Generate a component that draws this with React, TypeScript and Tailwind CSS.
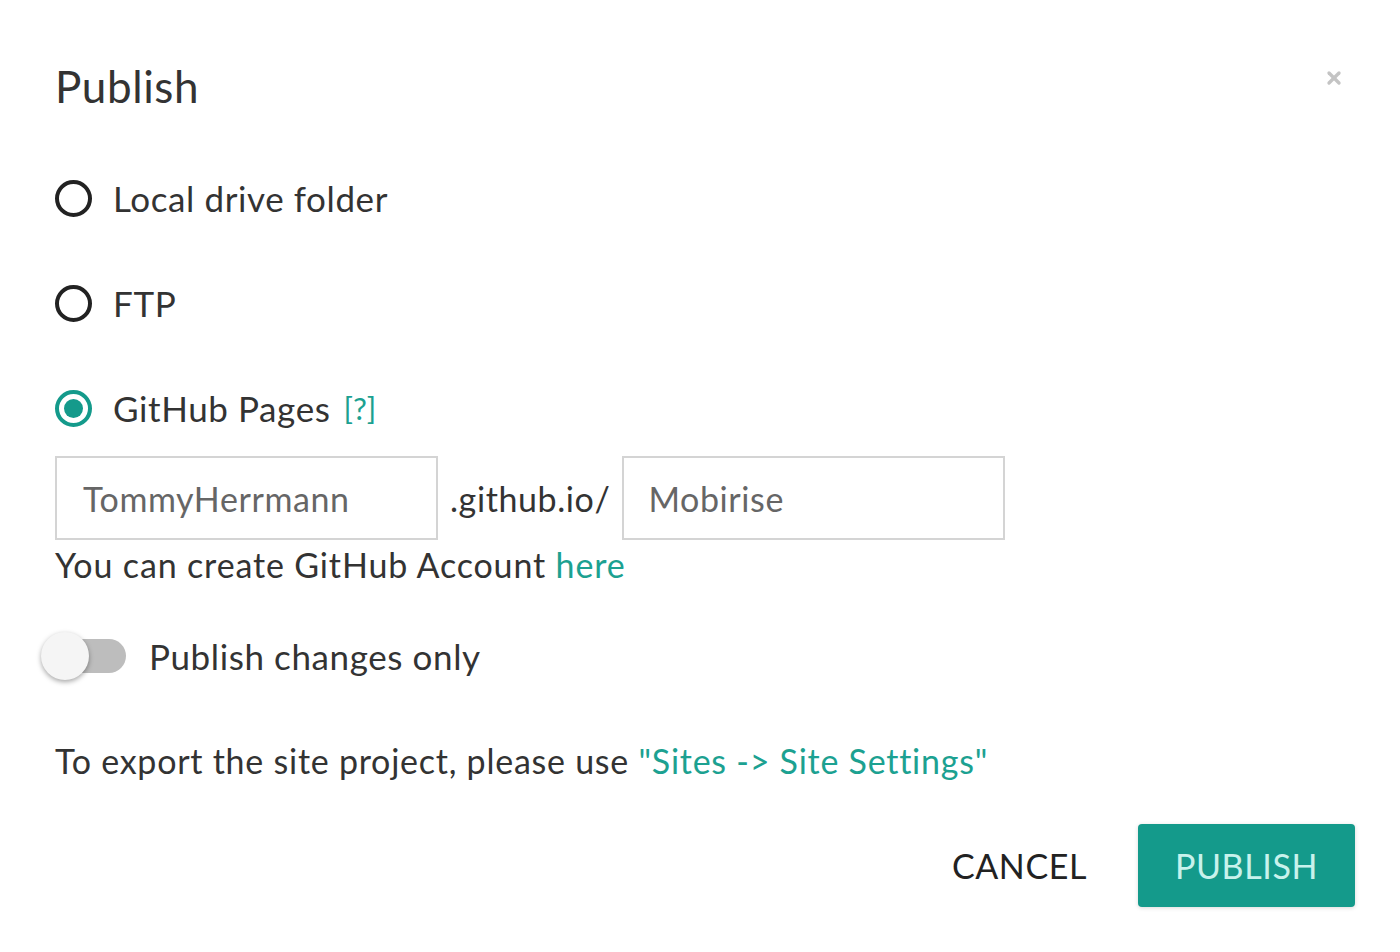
import { X } from "lucide-react"

function Radio({ label, checked, extra }: { label: string; checked?: boolean; extra?: React.ReactNode }) {
  return (
    <div className="flex h-[40px] items-center">
      {checked ? (
        <span className="flex h-[37px] w-[37px] items-center justify-center rounded-full border-[4px] border-[#149a8b]">
          <span className="h-[19px] w-[19px] rounded-full bg-[#149a8b]" />
        </span>
      ) : (
        <span className="h-[37px] w-[37px] rounded-full border-[4px] border-[#222]" />
      )}
      <span className="ml-[21px] text-[35px] text-[#333]">{label}</span>
      {extra}
    </div>
  )
}

export default function App() {
  return (
    <div className="min-h-screen w-full bg-white font-['Lato',sans-serif] tracking-[0.6px] text-[#333]">
      <div className="relative px-[55px] pt-[60px]">
        <div className="flex items-start justify-between">
          <h1 className="text-[44px] leading-[52px] text-[#333]">Publish</h1>
          <X className="mr-[1px] mt-[8px] h-[20px] w-[20px] text-[#c4c4c4]" strokeWidth={4} />
        </div>

        <div className="mt-[66px] flex flex-col gap-[65px]">
          <Radio label="Local drive folder" />
          <Radio label="FTP" />
          <Radio
            label="GitHub Pages"
            checked
            extra={<span className="ml-[13px] text-[31px] tracking-[0px] text-[#1ca191]">[?]</span>}
          />
        </div>

        <div className="mt-[28px] flex items-center">
          <div className="flex h-[84px] w-[383px] items-center border-2 border-[#d4d4d4] px-[26px] text-[34px] text-[#666]">
            TommyHerrmann
          </div>
          <span className="mx-[12px] text-[34px] text-[#333]">.github.io/</span>
          <div className="flex h-[84px] w-[383px] items-center border-2 border-[#d4d4d4] px-[24px] text-[34px] text-[#666]">
            Mobirise
          </div>
        </div>
        <p className="mt-[1px] text-[34px] leading-[48px] tracking-[0.85px] text-[#333]">
          You can create GitHub Account <span className="text-[#1ca191]">here</span>
        </p>

        <div className="mt-[41px] flex items-center">
          <div className="relative ml-[-13px] h-[34px] w-[84px] rounded-full bg-[#bdbdbd]">
            <span className="absolute left-[-1px] top-[-7px] h-[48px] w-[48px] rounded-full bg-[#f5f5f5] shadow-[0_2px_5px_rgba(0,0,0,0.35)]" />
          </div>
          <span className="ml-[23px] text-[35px] text-[#333]">Publish changes only</span>
        </div>

        <p className="mt-[54px] text-[34px] leading-[48px] tracking-[0.75px] text-[#333]">
          To export the site project, please use <span className="text-[#1ca191]">"Sites -&gt; Site Settings"</span>
        </p>

        <div className="mr-[-10px] mt-[39px] flex items-center justify-end">
          <button className="mr-[51px] text-[34px] text-[#222]">CANCEL</button>
          <button className="flex h-[83px] w-[217px] items-center justify-center rounded-[4px] bg-[#149a8b] text-[34px] text-[#c8f2ec] shadow-[0_1px_4px_rgba(0,0,0,0.15)]">
            PUBLISH
          </button>
        </div>
      </div>
    </div>
  )
}
